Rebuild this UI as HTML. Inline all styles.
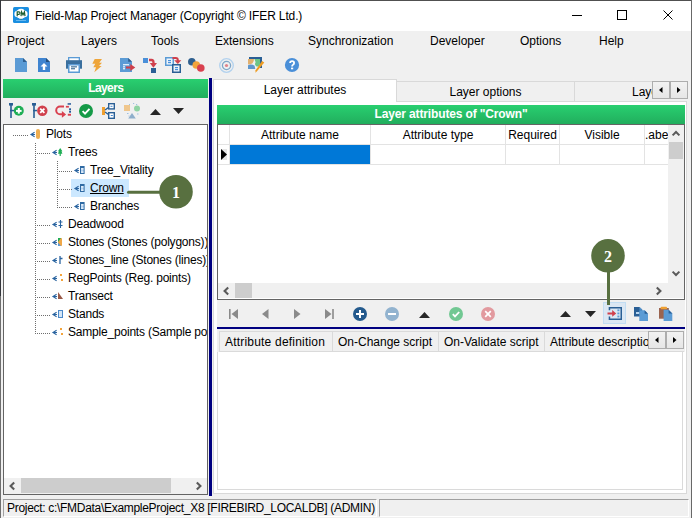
<!DOCTYPE html>
<html><head><meta charset="utf-8">
<style>
*{margin:0;padding:0;box-sizing:border-box}
html,body{width:692px;height:518px;overflow:hidden;background:#f0f0f0;font-family:"Liberation Sans",sans-serif;font-size:12px;color:#000}
.a{position:absolute}
.t{position:absolute;white-space:nowrap;line-height:14px;height:14px}
svg{position:absolute;overflow:visible}
</style></head><body>
<!-- window frame -->
<div class="a" style="left:0;top:0;width:692px;height:1px;background:#505050"></div>
<div class="a" style="left:0;top:0;width:1px;height:296px;background:#34363b"></div><div class="a" style="left:0;top:296px;width:1px;height:222px;background:#6e6e6e"></div>
<div class="a" style="left:691px;top:0;width:1px;height:518px;background:#686868"></div>
<!-- title bar -->
<div class="a" style="left:1px;top:1px;width:690px;height:30px;background:#fff"></div>
<svg style="left:13px;top:7px" width="16" height="16" viewBox="0 0 16 16"><rect x="0" y="0" width="16" height="16" rx="1.5" fill="#1a8ee0"/><circle cx="8" cy="6.8" r="5" fill="#fff"/><circle cx="4.6" cy="7" r="3.2" fill="#fff"/><circle cx="11.4" cy="7" r="3.2" fill="#fff"/><circle cx="8" cy="8.6" r="3.2" fill="#fff"/><path d="M4.2 9.2V4.9H5.9Q7.1 4.9 7.1 6.1Q7.1 7.3 5.9 7.3H4.2" fill="none" stroke="#1d5e33" stroke-width="1.2"/><path d="M8 9.2L8.6 4.9L10 7.8L11.4 4.9L12 9.2" fill="none" stroke="#1d5e33" stroke-width="1.2"/><rect x="3" y="13" width="10" height="0.8" fill="#7cc4f2"/><rect x="7.5" y="11.8" width="1" height="1" fill="#2a7a4a"/></svg>
<div class="t" style="left:35px;top:9px;font-size:12px;letter-spacing:-0.13px">Field-Map Project Manager (Copyright © IFER Ltd.)</div>
<div class="a" style="left:572px;top:15px;width:10px;height:1px;background:#000"></div>
<div class="a" style="left:617px;top:10px;width:10px;height:10px;border:1px solid #000"></div>
<svg style="left:663px;top:10px" width="10" height="10" viewBox="0 0 10 10"><path d="M0.5 0.5L9.5 9.5M9.5 0.5L0.5 9.5" stroke="#000" stroke-width="1"/></svg>

<!-- menu -->
<div class="t" style="left:7px;top:34px">Project</div>
<div class="t" style="left:81px;top:34px">Layers</div>
<div class="t" style="left:151px;top:34px">Tools</div>
<div class="t" style="left:215px;top:34px">Extensions</div>
<div class="t" style="left:308px;top:34px">Synchronization</div>
<div class="t" style="left:430px;top:34px">Developer</div>
<div class="t" style="left:520px;top:34px">Options</div>
<div class="t" style="left:599px;top:34px">Help</div>

<!-- toolbar icons -->
<svg style="left:15px;top:58px" width="12" height="14" viewBox="0 0 12 14"><path d="M0 0H8L12 4V14H0Z" fill="#5b9bd5"/><path d="M8 0L12 4H8Z" fill="#2f5f8f"/></svg>
<svg style="left:38px;top:58px" width="12" height="14" viewBox="0 0 12 14"><path d="M0 0H8L12 4V14H0Z" fill="#3f84d0"/><path d="M8 0L12 4H8Z" fill="#24507f"/><path d="M6 5L9.5 8.5H7.2V12H4.8V8.5H2.5Z" fill="#fff"/></svg>
<svg style="left:66px;top:57px" width="16" height="16" viewBox="0 0 16 16"><rect x="2" y="0" width="12" height="5" fill="#5b9bd5"/><rect x="3.3" y="1.3" width="9.4" height="3" fill="#fff"/><rect x="0" y="3.2" width="16" height="8.5" fill="#3a6f9e"/><rect x="2" y="7" width="12" height="9" fill="#5b9bd5"/><rect x="3.5" y="8.5" width="9" height="6" fill="#fff"/><rect x="5" y="9.3" width="6" height="1.1" fill="#34658f"/><rect x="5" y="11.2" width="4" height="1.1" fill="#34658f"/></svg>
<svg style="left:92px;top:59px" width="11" height="14" viewBox="0 0 11 14"><path d="M2.7 0H10L7.3 3.7H10L7 7H9.7L2.3 13.3L4 8.3H1.3L3.3 4.7H0.3Z" fill="#eea53a"/></svg>
<svg style="left:120px;top:58px" width="16" height="14" viewBox="0 0 16 14"><path d="M0 0H8.2L12 3.7V14H0Z" fill="#5b9bd5"/><path d="M8.2 0L12 3.7H8.2Z" fill="#2f5f8f"/><rect x="3" y="6.2" width="6" height="1.1" fill="#fff"/><rect x="3" y="8.3" width="2" height="1.1" fill="#fff"/><rect x="3" y="10.2" width="2" height="1.1" fill="#fff"/><path d="M6 8.6H10.3V6L15.3 9.5L10.3 13V10.4H6Z" fill="#cf3f4a"/></svg>
<svg style="left:143px;top:58px" width="15" height="15" viewBox="0 0 15 15"><rect x="0" y="0" width="5" height="5" fill="#4a90d9"/><rect x="8" y="10" width="5" height="5" fill="#2a5f95"/><path d="M6 2H8.5Q10.5 2 10.5 4.5V5.5" fill="none" stroke="#d0404c" stroke-width="2.3"/><path d="M6.8 5.1H14L10.4 9.7Z" fill="#d0404c"/></svg>
<svg style="left:165px;top:57px" width="16" height="16" viewBox="0 0 16 16"><rect x="0" y="0" width="9" height="9" fill="#5b9bd5"/><rect x="1.5" y="1.5" width="6" height="6" fill="#eef4fb"/><rect x="3" y="3" width="3" height="1.2" fill="#4a90d9"/><rect x="3" y="5" width="3" height="1.2" fill="#4a90d9"/><rect x="7" y="7" width="9" height="9" fill="#2a5f95"/><rect x="8.5" y="8.5" width="6" height="6" fill="#eef4fb"/><rect x="10" y="10" width="3" height="1.2" fill="#4a90d9"/><rect x="10" y="12" width="3" height="1.2" fill="#4a90d9"/><path d="M7.5 1H10.8Q12.8 1 12.8 3V4" fill="none" stroke="#d0404c" stroke-width="2"/><path d="M9.2 3.2H16.3L12.8 7Z" fill="#d0404c"/></svg>
<svg style="left:188px;top:58px" width="17" height="14" viewBox="0 0 17 14"><circle cx="3.8" cy="3.8" r="3.8" fill="#2f5f8f"/><circle cx="8.3" cy="7" r="3.8" fill="#f3a43b"/><circle cx="12.8" cy="10" r="3.8" fill="#d9404f"/></svg>
<svg style="left:219px;top:58px" width="15" height="15" viewBox="0 0 15 15"><circle cx="7.5" cy="7.5" r="6.8" fill="none" stroke="#b3d2ee" stroke-width="1.3"/><circle cx="7.5" cy="7.5" r="4.1" fill="none" stroke="#7ea6c8" stroke-width="1.3"/><circle cx="7.5" cy="7.5" r="1.6" fill="#e0838a"/></svg>
<svg style="left:248px;top:57px" width="16" height="16" viewBox="0 0 16 16"><rect x="1" y="0" width="13" height="2" fill="#2a5f95"/><rect x="12" y="0" width="2" height="11" fill="#2a5f95"/><path d="M0 2.1H6Q6 7.6 0 7.6Z" fill="#e2b06e"/><path d="M6.4 2.1H12V9.5H8.6Q6 7.5 7.6 5.2Z" fill="#6cc487"/><path d="M0 8.2Q3.5 6.5 6.6 8.8L7.3 11.9H0Z" fill="#5f96cc"/><path d="M14 4L16.3 5.6L9.2 14L7.4 15.8L7.6 13.2Z" fill="#ee9c22"/></svg>
<svg style="left:285px;top:58px" width="14" height="14" viewBox="0 0 14 14"><circle cx="7" cy="7" r="7.1" fill="#4a8fd8"/><path d="M5.1 5.1Q5.1 3.2 7.1 3.2Q9.1 3.2 9.1 5Q9.1 6.1 8 6.8Q7.1 7.3 7.1 8.6" fill="none" stroke="#fff" stroke-width="1.8"/><rect x="6" y="9.6" width="2.2" height="1.7" fill="#fff"/></svg>

<!-- Left panel -->
<div class="a" style="left:3px;top:79px;width:205px;height:19px;background:linear-gradient(#29cf70,#21ae5d)"></div>
<div class="t" style="left:3px;top:81px;width:205px;text-align:center;color:#fff;font-weight:700;letter-spacing:-0.6px;text-indent:0.6px">Layers</div>

<!-- layers toolbar -->
<svg style="left:9px;top:103px" width="15" height="15" viewBox="0 0 15 15"><rect x="0" y="0" width="4" height="2.6" fill="#2a5f95"/><rect x="1.2" y="0" width="1.6" height="15" fill="#2a5f95"/><rect x="1" y="6.8" width="4" height="1.5" fill="#2a5f95"/><circle cx="9.8" cy="7.8" r="5" fill="#1fae55"/><rect x="7" y="6.9" width="5.6" height="2" fill="#fff"/><rect x="8.8" y="5" width="2" height="5.6" fill="#fff"/></svg>
<svg style="left:32px;top:103px" width="16" height="15" viewBox="0 0 16 15"><rect x="0" y="0" width="4" height="2.6" fill="#2a5f95"/><rect x="1.2" y="0" width="1.6" height="15" fill="#2a5f95"/><rect x="1" y="6.8" width="4" height="1.5" fill="#2a5f95"/><circle cx="10.3" cy="7.8" r="5.2" fill="#d0404c"/><path d="M8.2 5.7L12.4 9.9M12.4 5.7L8.2 9.9" stroke="#fff" stroke-width="1.8"/></svg>
<svg style="left:55px;top:103px" width="17" height="16" viewBox="0 0 17 16"><path d="M9 3.6H5A3.8 3.8 0 0 0 5 11.2H8" fill="none" stroke="#d9404f" stroke-width="2"/><path d="M6.9 8L11.1 11.4L6.9 14.8Z" fill="#d9404f"/><rect x="12.6" y="0.2" width="3.4" height="1.5" fill="#24599a"/><rect x="10.9" y="2.9" width="3" height="1.7" fill="#d9404f"/><rect x="14.1" y="5.3" width="1.9" height="1.9" fill="#24599a"/><rect x="14.1" y="7.8" width="1.9" height="1.9" fill="#24599a"/><rect x="12.8" y="10.8" width="3.2" height="1.9" fill="#d9404f"/></svg>
<svg style="left:79px;top:104px" width="14" height="14" viewBox="0 0 14 14"><circle cx="7" cy="7" r="7" fill="#159a47"/><path d="M3.6 7.2L6 9.6L10.5 4.8" fill="none" stroke="#fff" stroke-width="1.9"/></svg>
<svg style="left:102px;top:103px" width="14" height="16" viewBox="0 0 14 16"><rect x="0" y="4" width="3" height="8" fill="#f0a030"/><path d="M3 7L6.5 4.5M3 9L6.5 11.5" stroke="#2a5f95" stroke-width="1.5" fill="none"/><rect x="6" y="0" width="7" height="6.6" fill="#2a5f95"/><rect x="7.4" y="1.4" width="4.2" height="3.8" fill="#fff"/><rect x="8.5" y="2.8" width="2" height="1" fill="#3f84d0"/><rect x="6" y="9" width="7" height="7" fill="#2a5f95"/><rect x="7.4" y="10.4" width="4.2" height="4.2" fill="#fff"/><rect x="8.8" y="12" width="2" height="1" fill="#3f84d0"/></svg>
<svg style="left:123px;top:103px" width="17" height="16" viewBox="0 0 17 16"><rect x="1" y="2" width="6" height="6" fill="#efc68c"/><circle cx="14" cy="5.6" r="3" fill="#8fd3a3"/><path d="M9 10L12.8 15.6H5.2Z" fill="#8eaecb"/><rect x="6" y="1" width="1" height="1" fill="#9fc0e0"/><rect x="10" y="0" width="1.2" height="1" fill="#9fc0e0"/><rect x="13" y="1" width="1.2" height="1" fill="#9fc0e0"/><rect x="4" y="10" width="1.5" height="1" fill="#9fc0e0"/><rect x="5.5" y="12.5" width="1" height="1" fill="#9fc0e0"/><rect x="14" y="10.5" width="1.5" height="1" fill="#9fc0e0"/></svg>
<svg style="left:150px;top:109px" width="11" height="6" viewBox="0 0 11 6"><path d="M5.5 0L11 6H0Z" fill="#262626"/></svg>
<svg style="left:173px;top:108px" width="11" height="6" viewBox="0 0 11 6"><path d="M0 0H11L5.5 6Z" fill="#262626"/></svg>

<!-- tree box -->
<div class="a" style="left:3px;top:124px;width:205px;height:371px;border:1px solid #646464;background:#fff"></div>
<div class="a" style="left:4px;top:125px;width:203px;height:353px;overflow:hidden">
<div class="a" style="left:-4px;top:-125px;width:692px;height:518px">
<div class="a" style="left:71px;top:179px;width:58px;height:18px;background:#cce8ff"></div>
<div class="a" style="left:35px;top:143px;width:1px;height:191px;background:repeating-linear-gradient(180deg,#6e6e6e 0 1px,transparent 1px 2px)"></div>
<div class="a" style="left:57px;top:161px;width:1px;height:47px;background:repeating-linear-gradient(180deg,#6e6e6e 0 1px,transparent 1px 2px)"></div>
<div class="a" style="left:13px;top:135px;width:16px;height:1px;background:repeating-linear-gradient(90deg,#6e6e6e 0 1px,transparent 1px 2px)"></div>
<svg style="left:30px;top:132px" width="5" height="5" viewBox="0 0 5 5"><path d="M4.6 0.2L1 2.5L4.6 4.8M0.4 2.5H5" fill="none" stroke="#2a64a0" stroke-width="1.1"/></svg>
<div class="a" style="left:36px;top:129px;width:4px;height:10px;border-radius:2px;background:#eeae50"></div>
<div class="t" style="left:46px;top:127px;letter-spacing:-0.2px;">Plots</div>
<div class="a" style="left:37px;top:153px;width:14px;height:1px;background:repeating-linear-gradient(90deg,#6e6e6e 0 1px,transparent 1px 2px)"></div>
<svg style="left:52px;top:150px" width="5" height="5" viewBox="0 0 5 5"><path d="M4.6 0.2L1 2.5L4.6 4.8M0.4 2.5H5" fill="none" stroke="#2a64a0" stroke-width="1.1"/></svg>
<svg style="left:58px;top:148px" width="5" height="8" viewBox="0 0 5 8"><path d="M2.2 0L4.4 3.2H3.5L4.4 5.8H2.8V8H1.6V5.8H0L0.9 3.2H0Z" fill="#1fae55"/></svg>
<div class="t" style="left:68px;top:145px;letter-spacing:-0.2px;">Trees</div>
<div class="a" style="left:59px;top:171px;width:14px;height:1px;background:repeating-linear-gradient(90deg,#6e6e6e 0 1px,transparent 1px 2px)"></div>
<svg style="left:74px;top:168px" width="5" height="5" viewBox="0 0 5 5"><path d="M4.6 0.2L1 2.5L4.6 4.8M0.4 2.5H5" fill="none" stroke="#2a64a0" stroke-width="1.1"/></svg>
<svg style="left:80px;top:166px" width="5" height="8" viewBox="0 0 5 8"><rect x="0" y="0" width="4.6" height="8" fill="#2f6aa3"/><rect x="1" y="2" width="2.6" height="5" fill="#b3d1ef"/><rect x="1.2" y="2.4" width="2.2" height="1" fill="#fff"/><rect x="1.2" y="5.6" width="2.2" height="1" fill="#fff"/></svg>
<div class="t" style="left:90px;top:163px;letter-spacing:-0.2px;">Tree_Vitality</div>
<div class="a" style="left:59px;top:189px;width:14px;height:1px;background:repeating-linear-gradient(90deg,#6e6e6e 0 1px,transparent 1px 2px)"></div>
<svg style="left:74px;top:186px" width="5" height="5" viewBox="0 0 5 5"><path d="M4.6 0.2L1 2.5L4.6 4.8M0.4 2.5H5" fill="none" stroke="#2a64a0" stroke-width="1.1"/></svg>
<svg style="left:80px;top:184px" width="5" height="8" viewBox="0 0 5 8"><rect x="0" y="0" width="4.6" height="8" fill="#2f6aa3"/><rect x="1" y="2" width="2.6" height="5" fill="#b3d1ef"/><rect x="1.2" y="2.4" width="2.2" height="1" fill="#fff"/><rect x="1.2" y="5.6" width="2.2" height="1" fill="#fff"/></svg>
<div class="t" style="left:90px;top:181px;letter-spacing:-0.2px;text-decoration:underline;">Crown</div>
<div class="a" style="left:59px;top:207px;width:14px;height:1px;background:repeating-linear-gradient(90deg,#6e6e6e 0 1px,transparent 1px 2px)"></div>
<svg style="left:74px;top:204px" width="5" height="5" viewBox="0 0 5 5"><path d="M4.6 0.2L1 2.5L4.6 4.8M0.4 2.5H5" fill="none" stroke="#2a64a0" stroke-width="1.1"/></svg>
<svg style="left:80px;top:202px" width="5" height="8" viewBox="0 0 5 8"><rect x="0" y="0" width="4.6" height="8" fill="#2f6aa3"/><rect x="1" y="2" width="2.6" height="5" fill="#b3d1ef"/><rect x="1.2" y="2.4" width="2.2" height="1" fill="#fff"/><rect x="1.2" y="5.6" width="2.2" height="1" fill="#fff"/></svg>
<div class="t" style="left:90px;top:199px;letter-spacing:-0.2px;">Branches</div>
<div class="a" style="left:37px;top:225px;width:14px;height:1px;background:repeating-linear-gradient(90deg,#6e6e6e 0 1px,transparent 1px 2px)"></div>
<svg style="left:52px;top:222px" width="5" height="5" viewBox="0 0 5 5"><path d="M4.6 0.2L1 2.5L4.6 4.8M0.4 2.5H5" fill="none" stroke="#2a64a0" stroke-width="1.1"/></svg>
<svg style="left:58px;top:220px" width="5" height="8" viewBox="0 0 5 8"><path d="M2.5 0V8M0.5 2H4.5M0.5 5.5H4.5" fill="none" stroke="#2a64a0" stroke-width="1.1"/></svg>
<div class="t" style="left:68px;top:217px;letter-spacing:-0.2px;">Deadwood</div>
<div class="a" style="left:37px;top:243px;width:14px;height:1px;background:repeating-linear-gradient(90deg,#6e6e6e 0 1px,transparent 1px 2px)"></div>
<svg style="left:52px;top:240px" width="5" height="5" viewBox="0 0 5 5"><path d="M4.6 0.2L1 2.5L4.6 4.8M0.4 2.5H5" fill="none" stroke="#2a64a0" stroke-width="1.1"/></svg>
<svg style="left:58px;top:238px" width="4" height="8" viewBox="0 0 4 8"><rect x="0" y="0" width="4" height="8" rx="0.8" fill="#f0a848"/><path d="M0 0H3L0 4Z" fill="#1fae55"/><path d="M0 4.5L3 8H0Z" fill="#5b9bd5"/></svg>
<div class="t" style="left:68px;top:235px;letter-spacing:-0.2px;">Stones (Stones (polygons))</div>
<div class="a" style="left:37px;top:261px;width:14px;height:1px;background:repeating-linear-gradient(90deg,#6e6e6e 0 1px,transparent 1px 2px)"></div>
<svg style="left:52px;top:258px" width="5" height="5" viewBox="0 0 5 5"><path d="M4.6 0.2L1 2.5L4.6 4.8M0.4 2.5H5" fill="none" stroke="#2a64a0" stroke-width="1.1"/></svg>
<svg style="left:58px;top:256px" width="5" height="8" viewBox="0 0 5 8"><path d="M2 0V8M2 2.5H4.5" fill="none" stroke="#2a64a0" stroke-width="1.3"/></svg>
<div class="t" style="left:68px;top:253px;letter-spacing:-0.2px;">Stones_line (Stones (lines))</div>
<div class="a" style="left:37px;top:279px;width:14px;height:1px;background:repeating-linear-gradient(90deg,#6e6e6e 0 1px,transparent 1px 2px)"></div>
<svg style="left:52px;top:276px" width="5" height="5" viewBox="0 0 5 5"><path d="M4.6 0.2L1 2.5L4.6 4.8M0.4 2.5H5" fill="none" stroke="#2a64a0" stroke-width="1.1"/></svg>
<div class="a" style="left:60px;top:274px;width:2px;height:2px;background:#f3a43b"></div><div class="a" style="left:61px;top:279px;width:2px;height:2px;background:#f3a43b"></div>
<div class="t" style="left:68px;top:271px;letter-spacing:-0.2px;">RegPoints (Reg. points)</div>
<div class="a" style="left:37px;top:297px;width:14px;height:1px;background:repeating-linear-gradient(90deg,#6e6e6e 0 1px,transparent 1px 2px)"></div>
<svg style="left:52px;top:294px" width="5" height="5" viewBox="0 0 5 5"><path d="M4.6 0.2L1 2.5L4.6 4.8M0.4 2.5H5" fill="none" stroke="#2a64a0" stroke-width="1.1"/></svg>
<svg style="left:58px;top:292px" width="5" height="7" viewBox="0 0 5 7"><path d="M0 0L5 7H0Z" fill="#9a5a48"/></svg>
<div class="t" style="left:68px;top:289px;letter-spacing:-0.2px;">Transect</div>
<div class="a" style="left:37px;top:315px;width:14px;height:1px;background:repeating-linear-gradient(90deg,#6e6e6e 0 1px,transparent 1px 2px)"></div>
<svg style="left:52px;top:312px" width="5" height="5" viewBox="0 0 5 5"><path d="M4.6 0.2L1 2.5L4.6 4.8M0.4 2.5H5" fill="none" stroke="#2a64a0" stroke-width="1.1"/></svg>
<div class="a" style="left:58px;top:310px;width:5px;height:8px;border:1px solid #4a88c8;background:#d4e6f7"></div>
<div class="t" style="left:68px;top:307px;letter-spacing:-0.2px;">Stands</div>
<div class="a" style="left:37px;top:333px;width:14px;height:1px;background:repeating-linear-gradient(90deg,#6e6e6e 0 1px,transparent 1px 2px)"></div>
<svg style="left:52px;top:330px" width="5" height="5" viewBox="0 0 5 5"><path d="M4.6 0.2L1 2.5L4.6 4.8M0.4 2.5H5" fill="none" stroke="#2a64a0" stroke-width="1.1"/></svg>
<div class="a" style="left:60px;top:328px;width:2px;height:2px;background:#f3a43b"></div><div class="a" style="left:61px;top:333px;width:2px;height:2px;background:#f3a43b"></div>
<div class="t" style="left:68px;top:325px;letter-spacing:-0.2px;">Sample_points (Sample points)</div>
</div></div>
<div class="a" style="left:4px;top:478px;width:203px;height:16px;background:#f0f0f0"></div>
<div class="a" style="left:21px;top:478px;width:150px;height:15px;background:#cdcdcd"></div>
<svg style="left:9px;top:482px" width="6" height="8" viewBox="0 0 6 8"><path d="M5.2 0.6L1.6 4L5.2 7.4" fill="none" stroke="#5a5a5a" stroke-width="2.1"/></svg>
<svg style="left:196px;top:482px" width="6" height="8" viewBox="0 0 6 8"><path d="M0.8 0.6L4.4 4L0.8 7.4" fill="none" stroke="#5a5a5a" stroke-width="2.1"/></svg>
<div class="a" style="left:209px;top:78px;width:3px;height:418px;background:#000080"></div>
<div class="a" style="left:213px;top:101px;width:474px;height:393px;border:1px solid #d9d9d9;background:#fff"></div>
<div class="a" style="left:396px;top:81px;width:179px;height:21px;border:1px solid #d9d9d9;background:#f0f0f0"></div>
<div class="a" style="left:574px;top:81px;width:112px;height:21px;border:1px solid #d9d9d9;border-right:none;background:#f0f0f0"></div>
<div class="a" style="left:213px;top:79px;width:184px;height:23px;border:1px solid #d9d9d9;border-bottom:none;background:#fff"></div>
<div class="t" style="left:213px;top:83px;width:184px;text-align:center">Layer attributes</div>
<div class="t" style="left:396px;top:85px;width:179px;text-align:center">Layer options</div>
<div class="a" style="left:575px;top:82px;width:77px;height:19px;overflow:hidden"><div class="t" style="left:57px;top:3px">Layer attributes</div></div>
<div class="a" style="left:652px;top:81px;width:18px;height:18px;border:1px solid #adadad;background:linear-gradient(#f2f2f2,#e6e6e6)"></div>
<svg style="left:659px;top:87px" width="4" height="6" viewBox="0 0 4 6"><path d="M3.5 0V6L0 3Z" fill="#000"/></svg>
<div class="a" style="left:670px;top:81px;width:18px;height:18px;border:1px solid #adadad;background:linear-gradient(#f2f2f2,#e6e6e6)"></div>
<svg style="left:677px;top:87px" width="4" height="6" viewBox="0 0 4 6"><path d="M0 0V6L3.5 3Z" fill="#000"/></svg>
<div class="a" style="left:217px;top:105px;width:468px;height:222px;background:#f0f0f0"></div>
<div class="a" style="left:217px;top:105px;width:468px;height:19px;background:linear-gradient(#29cf70,#21ae5d)"></div>
<div class="t" style="left:217px;top:107px;width:468px;text-align:center;color:#fff;font-weight:700;letter-spacing:-0.14px">Layer attributes of "Crown"</div>
<div class="a" style="left:217px;top:124px;width:468px;height:176px;border:1px solid #646464;background:#fff"></div>
<div class="a" style="left:218px;top:144px;width:450px;height:1px;background:#e3e3e3"></div>
<div class="a" style="left:218px;top:164px;width:450px;height:1px;background:#e3e3e3"></div>
<div class="a" style="left:229px;top:125px;width:1px;height:40px;background:#e3e3e3"></div>
<div class="a" style="left:370px;top:125px;width:1px;height:40px;background:#e3e3e3"></div>
<div class="a" style="left:505px;top:125px;width:1px;height:40px;background:#e3e3e3"></div>
<div class="a" style="left:559px;top:125px;width:1px;height:40px;background:#e3e3e3"></div>
<div class="a" style="left:644px;top:125px;width:1px;height:40px;background:#e3e3e3"></div>
<div class="a" style="left:230px;top:145px;width:140px;height:19px;background:#0078d7"></div>
<div class="a" style="left:221px;top:149px;width:6px;height:11px;background:#e6e6e6"></div><svg style="left:221px;top:149px" width="6" height="11" viewBox="0 0 6 11"><path d="M0 0L6 5.5L0 11Z" fill="#000"/></svg>
<div class="t" style="left:230px;top:128px;width:140px;text-align:center">Attribute name</div>
<div class="t" style="left:371px;top:128px;width:134px;text-align:center">Attribute type</div>
<div class="t" style="left:506px;top:128px;width:53px;text-align:center">Required</div>
<div class="t" style="left:560px;top:128px;width:84px;text-align:center">Visible</div>
<div class="a" style="left:645px;top:125px;width:23px;height:19px;overflow:hidden"><div class="t" style="left:0px;top:3px">.abe</div></div>
<div class="a" style="left:668px;top:125px;width:16px;height:158px;background:#f0f0f0"></div>
<svg style="left:672px;top:131px" width="8" height="5" viewBox="0 0 8 5"><path d="M0.6 4.4L4 1L7.4 4.4" fill="none" stroke="#5a5a5a" stroke-width="2"/></svg>
<div class="a" style="left:669px;top:142px;width:14px;height:17px;background:#cdcdcd"></div>
<svg style="left:672px;top:271px" width="8" height="5" viewBox="0 0 8 5"><path d="M0.6 0.6L4 4L7.4 0.6" fill="none" stroke="#5a5a5a" stroke-width="2"/></svg>
<div class="a" style="left:218px;top:283px;width:466px;height:15px;background:#f0f0f0"></div>
<div class="a" style="left:235px;top:283px;width:17px;height:15px;background:#cdcdcd"></div>
<svg style="left:223px;top:287px" width="6" height="8" viewBox="0 0 6 8"><path d="M5.2 0.6L1.6 4L5.2 7.4" fill="none" stroke="#5a5a5a" stroke-width="2.1"/></svg>
<svg style="left:656px;top:287px" width="6" height="8" viewBox="0 0 6 8"><path d="M0.8 0.6L4.4 4L0.8 7.4" fill="none" stroke="#5a5a5a" stroke-width="2.1"/></svg>
<svg style="left:229px;top:309px" width="9" height="10" viewBox="0 0 9 10"><rect x="0" y="0" width="1.6" height="10" fill="#8a8a8a"/><path d="M9 0V10L2.5 5Z" fill="#8a8a8a"/></svg>
<svg style="left:262px;top:309px" width="7" height="10" viewBox="0 0 7 10"><path d="M6.5 0V10L0 5Z" fill="#8a8a8a"/></svg>
<svg style="left:294px;top:309px" width="7" height="10" viewBox="0 0 7 10"><path d="M0 0V10L6.5 5Z" fill="#8a8a8a"/></svg>
<svg style="left:325px;top:309px" width="9" height="10" viewBox="0 0 9 10"><path d="M0 0V10L6.5 5Z" fill="#8a8a8a"/><rect x="7.2" y="0" width="1.6" height="10" fill="#8a8a8a"/></svg>
<svg style="left:353px;top:307px" width="14" height="14" viewBox="0 0 14 14"><circle cx="7" cy="7" r="7" fill="#245a8d"/><rect x="3" y="6" width="8" height="2" fill="#fff"/><rect x="6" y="3" width="2" height="8" fill="#fff"/></svg>
<svg style="left:385px;top:307px" width="14" height="14" viewBox="0 0 14 14"><circle cx="7" cy="7" r="7" fill="#92b3cf"/><rect x="3" y="6" width="8" height="2" fill="#fff"/></svg>
<svg style="left:419px;top:312px" width="11" height="6" viewBox="0 0 11 6"><path d="M5.5 0L11 6H0Z" fill="#262626"/></svg>
<svg style="left:449px;top:307px" width="14" height="14" viewBox="0 0 14 14"><circle cx="7" cy="7" r="7" fill="#72c893"/><path d="M3.8 7.2L6 9.4L10.2 5" fill="none" stroke="#fff" stroke-width="1.8"/></svg>
<svg style="left:481px;top:307px" width="14" height="14" viewBox="0 0 14 14"><circle cx="7" cy="7" r="7" fill="#e29a9f"/><path d="M4.2 4.2L9.8 9.8M9.8 4.2L4.2 9.8" stroke="#fff" stroke-width="1.7"/></svg>
<svg style="left:560px;top:311px" width="11" height="6" viewBox="0 0 11 6"><path d="M5.5 0L11 6H0Z" fill="#262626"/></svg>
<svg style="left:585px;top:311px" width="11" height="6" viewBox="0 0 11 6"><path d="M0 0H11L5.5 6Z" fill="#262626"/></svg>
<div class="a" style="left:603px;top:302px;width:23px;height:22px;border:1px solid #c2ddf3;background:#dbe7f3"></div>
<svg style="left:607px;top:306px" width="16" height="15" viewBox="0 0 16 15"><path d="M1.7 0.9H15V13.9H1.7V10.5H3.2V12.4H13.5V2.4H3.2V4.2H1.7Z" fill="#2a5f95"/><rect x="10.4" y="3.4" width="2" height="1.8" fill="#5b9bd5"/><rect x="10.4" y="6.5" width="2" height="1.8" fill="#5b9bd5"/><rect x="10.4" y="9.6" width="2" height="1.8" fill="#5b9bd5"/><path d="M0.5 6.4H5.2V4L9.2 7.4L5.2 10.8V8.4H0.5Z" fill="#d0404c"/></svg>
<svg style="left:634px;top:307px" width="15" height="15" viewBox="0 0 15 15"><path d="M0 0H5.5L8.3 2.8V9.6H0Z" fill="#2a5f95"/><path d="M5.5 0L8.3 2.8H5.5Z" fill="#5b9bd5"/><rect x="2" y="5" width="3.5" height="2" fill="#b9d5ee"/><path d="M5.3 3.3H10.6L14 6.7V14H5.3Z" fill="#5b9bd5"/><path d="M10.6 3.3L14 6.7H10.6Z" fill="#2a5f95"/></svg>
<svg style="left:659px;top:306px" width="14" height="15" viewBox="0 0 14 15"><rect x="0" y="2" width="9.8" height="10.7" fill="#9b6450"/><rect x="1.7" y="0.7" width="6.3" height="2.5" rx="0.8" fill="#f0a030"/><path d="M4.6 3.8H9.6L13.3 7.5V15H4.6Z" fill="#5b9bd5"/><path d="M9.6 3.8L13.3 7.5H9.6Z" fill="#2a5f95"/></svg>
<div class="a" style="left:217px;top:327px;width:468px;height:2px;background:#000080"></div>
<div class="a" style="left:217px;top:329px;width:468px;height:23px;background:#f0f0f0"></div>
<div class="a" style="left:219px;top:331px;width:465px;height:21px;border-top:1px solid #dadada;border-bottom:1px solid #dadada"></div>
<div class="a" style="left:219px;top:331px;width:1px;height:21px;background:#dadada"></div>
<div class="a" style="left:332px;top:331px;width:1px;height:21px;background:#dadada"></div>
<div class="a" style="left:438px;top:331px;width:1px;height:21px;background:#dadada"></div>
<div class="a" style="left:544px;top:331px;width:1px;height:21px;background:#dadada"></div>
<div class="t" style="left:225px;top:335px;letter-spacing:0.2px">Attribute definition</div>
<div class="t" style="left:338px;top:335px">On-Change script</div>
<div class="t" style="left:444px;top:335px">On-Validate script</div>
<div class="a" style="left:545px;top:332px;width:103px;height:19px;overflow:hidden"><div class="t" style="left:5px;top:3px">Attribute description</div></div>
<div class="a" style="left:648px;top:331px;width:18px;height:18px;border:1px solid #adadad;background:linear-gradient(#f2f2f2,#e6e6e6)"></div>
<svg style="left:655px;top:337px" width="4" height="6" viewBox="0 0 4 6"><path d="M3.5 0V6L0 3Z" fill="#000"/></svg>
<div class="a" style="left:666px;top:331px;width:18px;height:18px;border:1px solid #adadad;background:linear-gradient(#f2f2f2,#e6e6e6)"></div>
<svg style="left:673px;top:337px" width="4" height="6" viewBox="0 0 4 6"><path d="M0 0V6L3.5 3Z" fill="#000"/></svg>
<div class="a" style="left:217px;top:352px;width:466px;height:138px;border:1px solid #dadada;border-top:none;background:#fff"></div>
<svg style="left:0;top:0" width="692" height="518" viewBox="0 0 692 518"><path d="M128.5 192.3H165" stroke="#587040" stroke-width="3" stroke-linecap="round"/><circle cx="176" cy="191.8" r="16.8" fill="#587040"/><path d="M608.5 272V305" stroke="#587040" stroke-width="3"/><circle cx="608" cy="255.8" r="16.8" fill="#587040"/><text x="176" y="198" font-family="Liberation Serif" font-weight="700" font-size="16" fill="#fff" text-anchor="middle">1</text><text x="608" y="262" font-family="Liberation Serif" font-weight="700" font-size="16" fill="#fff" text-anchor="middle">2</text></svg>
<div class="a" style="left:3px;top:499px;width:374px;height:18px;border-left:1px solid #a0a0a0;border-top:1px solid #a0a0a0;border-right:1px solid #fff;border-bottom:1px solid #fff"></div>
<div class="a" style="left:379px;top:499px;width:310px;height:18px;border-left:1px solid #a0a0a0;border-top:1px solid #a0a0a0;border-right:1px solid #fff;border-bottom:1px solid #fff"></div>
<div class="t" style="left:7px;top:501px;letter-spacing:-0.3px">Project: c:\FMData\ExampleProject_X8 [FIREBIRD_LOCALDB] (ADMIN)</div>
</body></html>
